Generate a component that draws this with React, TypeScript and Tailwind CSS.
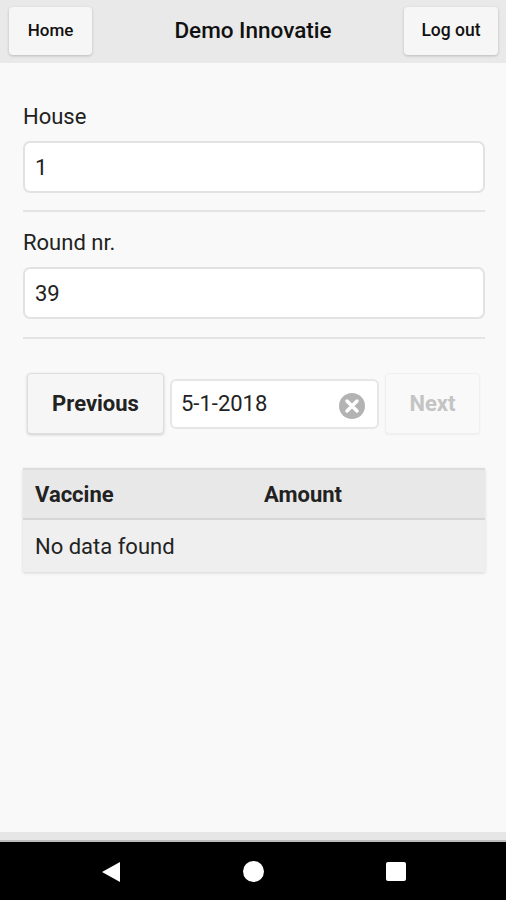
import React from "react";

export default function App() {
  return (
    <div className="w-[506px] h-[900px] flex flex-col bg-[#f9f9f9] overflow-hidden" style={{ fontFamily: "Roboto, 'Noto Sans', sans-serif" }}>
      {/* Header */}
      <div className="h-[63px] bg-[#e9e9e9] flex items-center justify-between pl-[9px] pr-[8px] relative shrink-0">
        <button className="w-[83px] h-[48px] -mt-[2px] bg-[#f6f6f6] rounded-[4px] shadow-[0_1px_3px_rgba(0,0,0,0.2)] text-[17px] font-medium text-[#111]">Home</button>
        <div className="absolute left-0 right-0 top-[16px] text-center text-[22.5px] leading-[28px] font-medium text-[#111] pointer-events-none">Demo Innovatie</div>
        <button className="w-[94px] h-[48px] -mt-[2px] bg-[#f6f6f6] rounded-[4px] shadow-[0_1px_3px_rgba(0,0,0,0.2)] text-[17.5px] font-medium text-[#111]">Log out</button>
      </div>

      {/* Content */}
      <div className="flex-1 pl-[23px] pr-[21px] pt-[41px] flex flex-col">
        <div className="text-[22px] text-[#222] leading-[26px]">House</div>
        <div className="mt-[11px] h-[52px] bg-white border-2 border-[#e2e2e2] rounded-[7px] flex items-center px-[10px] text-[22px] text-[#222]">1</div>
        <div className="mt-[17px] h-[2px] bg-[#e4e4e4]" />
        <div className="mt-[18px] text-[22px] text-[#222] leading-[26px]">Round nr.</div>
        <div className="mt-[11px] h-[52px] bg-white border-2 border-[#e2e2e2] rounded-[7px] flex items-center px-[10px] text-[22px] text-[#222]">39</div>
        <div className="mt-[18px] h-[2px] bg-[#e4e4e4]" />

        <div className="mt-[34px] flex items-center pl-[4px] gap-[6px]">
          <button className="w-[137px] h-[61px] bg-[#f6f6f6] border border-[#dedede] rounded-[4px] shadow-[0_1px_3px_rgba(0,0,0,0.18)] text-[22px] font-bold text-[#222]">Previous</button>
          <div className="w-[209px] h-[50px] bg-white border-2 border-[#e6e6e6] rounded-[6px] flex items-center justify-between pl-[9px] pr-[11px] text-[22px] text-[#222]">
            <span>5-1-2018</span>
            <svg width="28" height="28" viewBox="0 0 28 28" className="mt-[4px]">
              <circle cx="14" cy="14" r="13" fill="#b3b3b3" />
              <path d="M9 9 L19 19 M19 9 L9 19" stroke="white" strokeWidth="3.5" strokeLinecap="round" />
            </svg>
          </div>
          <button className="w-[95px] h-[61px] bg-[#f9f9f9] border border-[#f0f0f0] rounded-[4px] shadow-[0_1px_2px_rgba(0,0,0,0.05)] text-[22px] font-bold text-[#c4c4c4]">Next</button>
        </div>

        <div className="mt-[34px] shadow-[0_1px_3px_rgba(0,0,0,0.15)]">
          <div className="h-[52px] bg-[#e8e8e8] border-t-2 border-[#dcdcdc] border-b-2 border-b-[#d6d6d6] flex items-center text-[22px] font-bold text-[#222]">
            <div className="w-[241px] pl-[12px]">Vaccine</div>
            <div>Amount</div>
          </div>
          <div className="h-[52px] bg-[#efefef] flex items-center pl-[12px] text-[22px] text-[#222]">No data found</div>
        </div>
      </div>

      {/* Footer bar */}
      <div className="h-[8px] bg-[#e6e6e6] shrink-0" />
      <div className="h-[2px] bg-[#bdbdbd] shrink-0" />
      {/* Android nav */}
      <div className="h-[58px] bg-black flex items-center justify-center shrink-0 relative">
        <div className="absolute left-[101px] top-[19px]">
          <svg width="20" height="22" viewBox="0 0 20 22"><path d="M19 1 L19 21 L1 11 Z" fill="white" /></svg>
        </div>
        <div className="absolute left-[243px] top-[19px] w-[21px] h-[21px] rounded-full bg-white" />
        <div className="absolute left-[386px] top-[20px] w-[20px] h-[19px] rounded-[2px] bg-white" />
      </div>
    </div>
  );
}
